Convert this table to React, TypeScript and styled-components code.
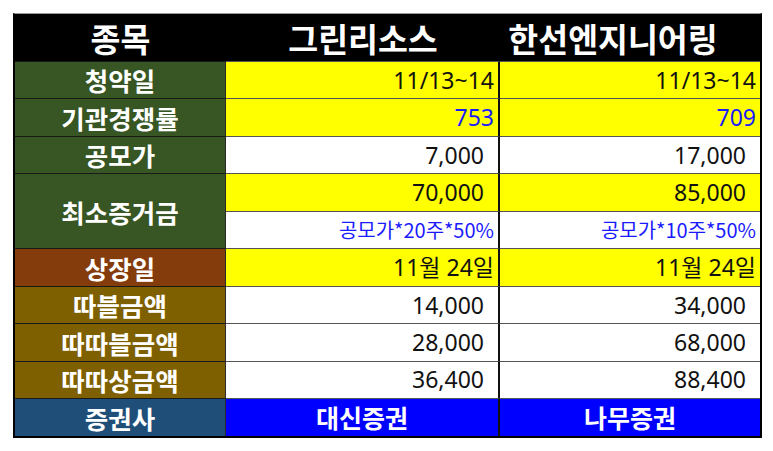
import { Fragment } from "react";
import styled, { createGlobalStyle } from "styled-components";

const GlobalStyle = createGlobalStyle`
  html, body {
    margin: 0;
    padding: 0;
    background: #ffffff;
  }
  body {
    font-family: "Noto Sans", "Noto Sans CJK KR", sans-serif;
  }
`;

const KR = `"Noto Sans CJK KR", "Noto Sans", sans-serif`;
const NUM = `"Noto Sans", "Noto Sans CJK KR", sans-serif`;

type Tone = "green" | "brown" | "olive" | "navy";
type Fill = "yellow" | "white" | "blue";

const toneColors: Record<Tone, string> = {
  green: "#375623",
  brown: "#843c0c",
  olive: "#7f6000",
  navy: "#1f4e78",
};

const fillColors: Record<Fill, string> = {
  yellow: "#ffff00",
  white: "#ffffff",
  blue: "#0000ff",
};

interface Cell {
  text: string;
  fill: Fill;
  kind?: "num" | "plain" | "note" | "firm";
  blue?: boolean;
}

interface Row {
  label?: string;
  span?: number;
  tone: Tone;
  cells: [Cell, Cell];
}

const rows: Row[] = [
  {
    label: "청약일",
    tone: "green",
    cells: [
      { text: "11/13~14", fill: "yellow", kind: "plain" },
      { text: "11/13~14", fill: "yellow", kind: "plain" },
    ],
  },
  {
    label: "기관경쟁률",
    tone: "green",
    cells: [
      { text: "753", fill: "yellow", kind: "plain", blue: true },
      { text: "709", fill: "yellow", kind: "plain", blue: true },
    ],
  },
  {
    label: "공모가",
    tone: "green",
    cells: [
      { text: "7,000", fill: "white", kind: "num" },
      { text: "17,000", fill: "white", kind: "num" },
    ],
  },
  {
    label: "최소증거금",
    span: 2,
    tone: "green",
    cells: [
      { text: "70,000", fill: "yellow", kind: "num" },
      { text: "85,000", fill: "yellow", kind: "num" },
    ],
  },
  {
    tone: "green",
    cells: [
      { text: "공모가*20주*50%", fill: "white", kind: "note" },
      { text: "공모가*10주*50%", fill: "white", kind: "note" },
    ],
  },
  {
    label: "상장일",
    tone: "brown",
    cells: [
      { text: "11월 24일", fill: "yellow", kind: "plain" },
      { text: "11월 24일", fill: "yellow", kind: "plain" },
    ],
  },
  {
    label: "따블금액",
    tone: "olive",
    cells: [
      { text: "14,000", fill: "white", kind: "num" },
      { text: "34,000", fill: "white", kind: "num" },
    ],
  },
  {
    label: "따따블금액",
    tone: "olive",
    cells: [
      { text: "28,000", fill: "white", kind: "num" },
      { text: "68,000", fill: "white", kind: "num" },
    ],
  },
  {
    label: "따따상금액",
    tone: "olive",
    cells: [
      { text: "36,400", fill: "white", kind: "num" },
      { text: "88,400", fill: "white", kind: "num" },
    ],
  },
  {
    label: "증권사",
    tone: "navy",
    cells: [
      { text: "대신증권", fill: "blue", kind: "firm" },
      { text: "나무증권", fill: "blue", kind: "firm" },
    ],
  },
];

export default function App() {
  return (
    <>
      <GlobalStyle />
      <Page>
        <Sheet>
          <HeadCell>종목</HeadCell>
          <HeadCell>그린리소스</HeadCell>
          <HeadCell $shift={34}>한선엔지니어링</HeadCell>
          {rows.map((row, i) => (
            <Fragment key={i}>
              {row.label && (
                <LabelCell $tone={row.tone} $span={row.span ?? 1}>
                  {row.label}
                </LabelCell>
              )}
              {row.cells.map((cell, j) => (
                <ValueCell
                  key={j}
                  $fill={cell.fill}
                  $kind={cell.kind ?? "plain"}
                  $blue={!!cell.blue}
                  $last={j === 1}
                >
                  {cell.text}
                </ValueCell>
              ))}
            </Fragment>
          ))}
        </Sheet>
      </Page>
    </>
  );
}

const Page = styled.div`
  padding: 13px 0 0 13px;
`;

const Sheet = styled.div`
  display: grid;
  grid-template-columns: 211px 274px 260px;
  grid-template-rows: 46px repeat(10, 37.47px);
  width: 749px;
  box-sizing: border-box;
  border: 2px solid #000000;
  border-top-color: #9a9a9a;
  border-top-width: 1px;
  padding-top: 1px;
  background: #000000;
`;

const HeadCell = styled.div<{ $shift?: number }>`
  display: flex;
  align-items: center;
  justify-content: center;
  padding-right: ${({ $shift }) => $shift ?? 0}px;
  background: #000000;
  color: #ffffff;
  font-family: ${KR};
  font-weight: 700;
  font-size: 32.5px;
  line-height: 1;
`;

const LabelCell = styled.div<{ $tone: Tone; $span: number }>`
  grid-row: span ${({ $span }) => $span};
  display: flex;
  align-items: center;
  justify-content: center;
  box-sizing: border-box;
  background: ${({ $tone }) => toneColors[$tone]};
  border-top: 1px solid #1a1a1a;
  border-right: 1px solid #2a2a2a;
  color: #ffffff;
  font-family: ${KR};
  font-weight: 700;
  font-size: 25.5px;
  line-height: 1;
`;

const ValueCell = styled.div<{
  $fill: Fill;
  $kind: "num" | "plain" | "note" | "firm";
  $blue: boolean;
  $last: boolean;
}>`
  display: flex;
  align-items: center;
  justify-content: ${({ $kind }) => ($kind === "firm" ? "center" : "flex-end")};
  box-sizing: border-box;
  padding-right: ${({ $kind }) =>
    $kind === "num" ? 14 : $kind === "firm" ? 0 : 4}px;
  background: ${({ $fill }) => fillColors[$fill]};
  border-top: 1px solid #555555;
  border-right: ${({ $last }) => ($last ? "none" : "2px solid #111111")};
  color: ${({ $blue, $kind }) =>
    $kind === "firm" ? "#ffffff" : $blue || $kind === "note" ? "#1a1aff" : "#111111"};
  font-family: ${({ $kind }) => ($kind === "firm" || $kind === "note" ? KR : NUM)};
  font-weight: ${({ $kind }) => ($kind === "firm" ? 700 : 400)};
  font-size: ${({ $kind }) =>
    $kind === "note" ? 20 : $kind === "firm" ? 25 : 23}px;
  line-height: 1;
  white-space: nowrap;
`;
